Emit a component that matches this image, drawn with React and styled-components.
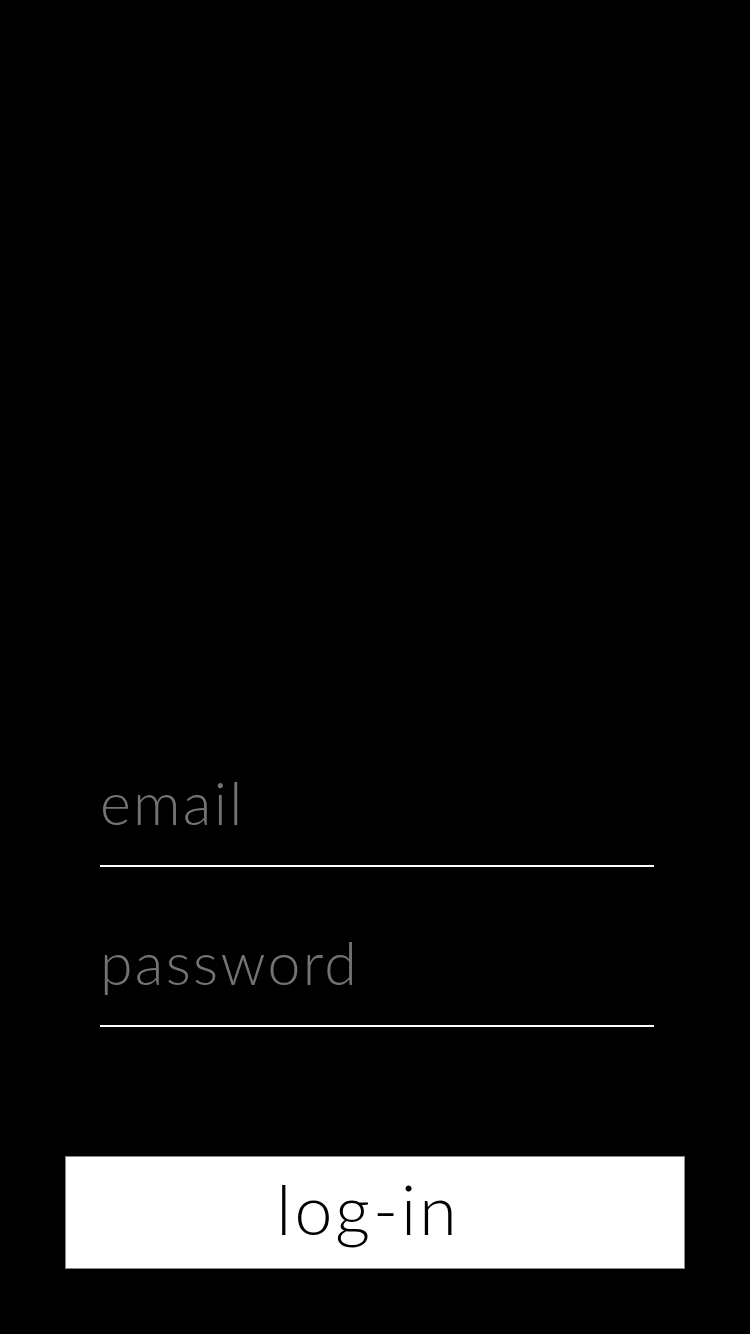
import styled, { createGlobalStyle } from "styled-components";

const GlobalStyle = createGlobalStyle`
  html, body {
    margin: 0;
    padding: 0;
    background: #000;
  }
  * {
    box-sizing: border-box;
  }
`;

const Screen = styled.div`
  height: 100vh;
  width: 100vw;
  background: #000;
  display: flex;
  flex-direction: column;
  justify-content: flex-end;
  align-items: center;
  padding-bottom: 65px;
  font-family: Lato, "Liberation Sans", sans-serif;
`;

const Form = styled.form`
  width: 620px;
  display: flex;
  flex-direction: column;
`;

const Fields = styled.div`
  display: flex;
  flex-direction: column;
  gap: 60px;
  padding: 0 31px 0 35px;
`;

const Input = styled.input`
  display: block;
  width: 100%;
  height: 100px;
  padding: 0 0 28px 0;
  background: transparent;
  border: none;
  border-bottom: 2px solid #fff;
  outline: none;
  color: #fff;
  font-family: inherit;
  font-size: 59px;
  font-weight: 300;
  letter-spacing: 2.3px;

  &::placeholder {
    color: #737373;
    opacity: 1;
  }
`;

const Button = styled.button`
  margin-top: 129px;
  width: 100%;
  height: 113px;
  background: #fff;
  border: 1px solid #8a8a8a;
  color: #000;
  font-family: inherit;
  font-size: 68px;
  font-weight: 300;
  letter-spacing: 3px;
  padding: 0 14px 8px 0;
  cursor: pointer;
`;

export default function App() {
  return (
    <>
      <GlobalStyle />
      <Screen>
        <Form onSubmit={(e) => e.preventDefault()}>
          <Fields>
            <Input type="email" placeholder="email" />
            <Input type="password" placeholder="password" />
          </Fields>
          <Button type="submit">log-in</Button>
        </Form>
      </Screen>
    </>
  );
}
